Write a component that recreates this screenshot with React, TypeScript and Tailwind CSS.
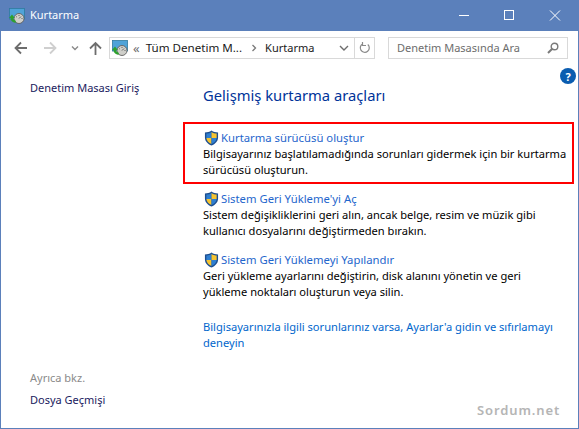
import React from "react";

const F = { fontFamily: '"Noto Sans", sans-serif' };

function Shield() {
  return (
    <svg width="15" height="16" viewBox="0 0 16 17" className="shrink-0 ml-px">
      <path d="M8 .5C6 2 3.500 2.600 1 2.600V8c0 4 3 7 7 8.500 4-1.500 7-4.500 7-8.500V2.600C12.500 2.600 10 2 8 .5z" fill="#1d4e8f" />
      <path d="M8 2v6.500H2.500V3.800C4.500 3.700 6.500 3 8 2z" fill="#2f7fd0" />
      <path d="M8 2c1.500 1 3.500 1.700 5.500 1.800v4.700H8z" fill="#f5c431" />
      <path d="M2.500 8.500H8v6.500C5 13.800 2.900 11.500 2.500 8.500z" fill="#f5c431" />
      <path d="M8 8.500h5.500c-.4 3-2.500 5.300-5.500 6.500z" fill="#2f7fd0" />
    </svg>
  );
}

function AppIcon({ size }: { size: number }) {
  return (
    <svg width={size} height={size} viewBox="0 0 16 16" className="shrink-0">
      <rect x="0.500" y="0.500" width="15" height="10.500" fill="#4fa3d8" stroke="#2f7a9f" strokeWidth="0.8" />
      <circle cx="10" cy="10.500" r="5" fill="#cfcfca" stroke="#5f5f5f" strokeWidth="0.9" />
      <path d="M10 10.500l2-2M10 7v1M13.500 10.500h-1M7 8.500l.8.500" stroke="#444" strokeWidth="0.8" fill="none" />
      <path d="M1.500 10a4.500 4.500 0 0 0 5.500 4.500l-.5-2A2.600 2.600 0 0 1 4 10h1.800L3 6.500 0 10z" fill="#2ea12e" />
    </svg>
  );
}

function Task({ title, lines }: { title: string; lines: string[] }) {
  return (
    <div className="flex flex-col">
      <div className="flex items-center gap-px h-[17px]">
        <Shield />
        <span className="text-[11.3px] leading-[17px] text-[#1f66cc] ml-px whitespace-nowrap">{title}</span>
      </div>
      {lines.map((l) => (
        <div key={l} className="text-[11.125px] leading-[16px] text-black whitespace-nowrap">{l}</div>
      ))}
    </div>
  );
}

export default function App() {
  return (
    <div style={F} className="relative w-[579px] h-[429px] flex flex-col bg-white border border-[#5b80bb] border-t-0 overflow-hidden">
      <div className="h-[31px] bg-[#5b80bb] flex items-center shrink-0 pl-[8px] text-white">
        <AppIcon size={16} />
        <span className="ml-[5px] text-[11px]">Kurtarma</span>
        <div className="ml-auto flex items-center h-full">
          <svg width="46" height="31" viewBox="0 0 46 31"><path d="M19 15.500h10" stroke="#fff" strokeWidth="1" /></svg>
          <svg width="46" height="31" viewBox="0 0 46 31"><rect x="18.500" y="10.500" width="9" height="9" fill="none" stroke="#fff" /></svg>
          <svg width="46" height="31" viewBox="0 0 46 31"><path d="M18 10.500l10 10M28 10.500l-10 10" stroke="#fff" strokeWidth="1" /></svg>
        </div>
      </div>

      <div className="h-[34px] flex items-center shrink-0 pt-[6px] pb-[6px] pl-[13px]">
        <svg width="13" height="14" viewBox="0 0 13 14"><path d="M13 7H2M7 1.500L1.500 7 7 12.500" fill="none" stroke="#6d6d6d" strokeWidth="1.800" /></svg>
        <svg width="13" height="14" viewBox="0 0 13 14" className="ml-[17px]"><path d="M0 7h11M6 1.500L11.500 7 6 12.500" fill="none" stroke="#cfcfcf" strokeWidth="1.800" /></svg>
        <svg width="8" height="6" viewBox="0 0 8 6" className="ml-[14px]"><path d="M1 1.500L4 4.500 7 1.500" fill="none" stroke="#8a8a8a" strokeWidth="1.400" /></svg>
        <svg width="13" height="14" viewBox="0 0 13 14" className="ml-[10px]"><path d="M6.500 14V2M1 7.500L6.500 2 12 7.500" fill="none" stroke="#6d6d6d" strokeWidth="1.800" /></svg>
        <div className="ml-[7px] w-[266px] h-[22px] border border-[#d9d9d9] flex items-center pl-[2px]">
          <AppIcon size={16} />
          <span className="ml-[5px] text-[13px] text-[#6d6d6d] leading-none">«</span>
          <span className="ml-[6px] text-[11.6px] text-[#1a1a1a] whitespace-nowrap">Tüm Denetim M...</span>
          <svg width="6" height="8" viewBox="0 0 6 8" className="ml-[9px]"><path d="M1.500 1L4.500 4 1.500 7" fill="none" stroke="#7a7a7a" strokeWidth="1.300" /></svg>
          <span className="ml-[8px] text-[11px] text-[#1a1a1a]">Kurtarma</span>
          <svg width="10" height="6" viewBox="0 0 10 6" className="ml-auto mr-[5px]"><path d="M1 1l4 4 4-4" fill="none" stroke="#6d6d6d" strokeWidth="1.400" /></svg>
          <div className="w-[20px] h-full border-l border-[#d9d9d9] flex items-center justify-center">
            <svg width="12" height="12" viewBox="0 0 12 12"><path d="M8.800 2.500A4.500 4.500 0 1 1 4 1.700M3.500 0v3.500H7" fill="none" stroke="#8a8a8a" strokeWidth="1.200" /></svg>
          </div>
        </div>
        <div className="ml-[13px] w-[180px] h-[22px] border border-[#d9d9d9] flex items-center pl-[8px] pr-[8px]">
          <span className="text-[11px] text-[#6d6d6d] whitespace-nowrap">Denetim Masasında Ara</span>
          <svg width="12" height="12" viewBox="0 0 12 12" className="ml-auto"><circle cx="7.500" cy="4.500" r="3.300" fill="none" stroke="#7a7a7a" strokeWidth="1.400" /><path d="M5 7L1 11" stroke="#7a7a7a" strokeWidth="2" /></svg>
        </div>
      </div>

      <div className="flex-1 flex min-h-0">
        <div className="w-[202px] shrink-0 flex flex-col pl-[29px] pt-[15px] pb-[20px] text-[11px]">
          <span className="leading-[16px] text-[#1a1a5e]">Denetim Masası Giriş</span>
          <span className="mt-auto leading-[16px] text-[#8a8a8a]">Ayrıca bkz.</span>
          <span className="mt-[6px] leading-[16px] text-[#1a1a5e]">Dosya Geçmişi</span>
        </div>
        <div className="flex-1 flex flex-col pt-[20px]">
          <div className="text-[14.75px] leading-[20px] text-[#003399]">Gelişmiş kurtarma araçları</div>
          <div className="mt-[24px] flex flex-col gap-[12px]">
            <Task title="Kurtarma sürücüsü oluştur" lines={["Bilgisayarınız başlatılamadığında sorunları gidermek için bir kurtarma", "sürücüsü oluşturun."]} />
            <Task title="Sistem Geri Yükleme'yi Aç" lines={["Sistem değişikliklerini geri alın, ancak belge, resim ve müzik gibi", "kullanıcı dosyalarını değiştirmeden bırakın."]} />
            <Task title="Sistem Geri Yüklemeyi Yapılandır" lines={["Geri yükleme ayarlarını değiştirin, disk alanını yönetin ve geri", "yükleme noktaları oluşturun veya silin."]} />
          </div>
          <div className="mt-[19px] text-[11.125px] leading-[16px] text-[#0066cc]">
            <div className="whitespace-nowrap">Bilgisayarınızla ilgili sorunlarınız varsa, Ayarlar'a gidin ve sıfırlamayı</div>
            <div>deneyin</div>
          </div>
        </div>
      </div>

      <div className="absolute left-[559px] top-[68px] w-[16px] h-[16px] rounded-full bg-[#0a5cb0] flex items-center justify-center text-white text-[11px] font-bold leading-none">?</div>
      <div className="absolute left-[182px] top-[122px] w-[391px] h-[62px] border-2 border-[#ff0000]" />
      <div className="absolute left-[476px] top-[402px] text-[13px] tracking-[0.9px] leading-[16px] text-[#b5b5b5] font-semibold">Sordum.net</div>
    </div>
  );
}
